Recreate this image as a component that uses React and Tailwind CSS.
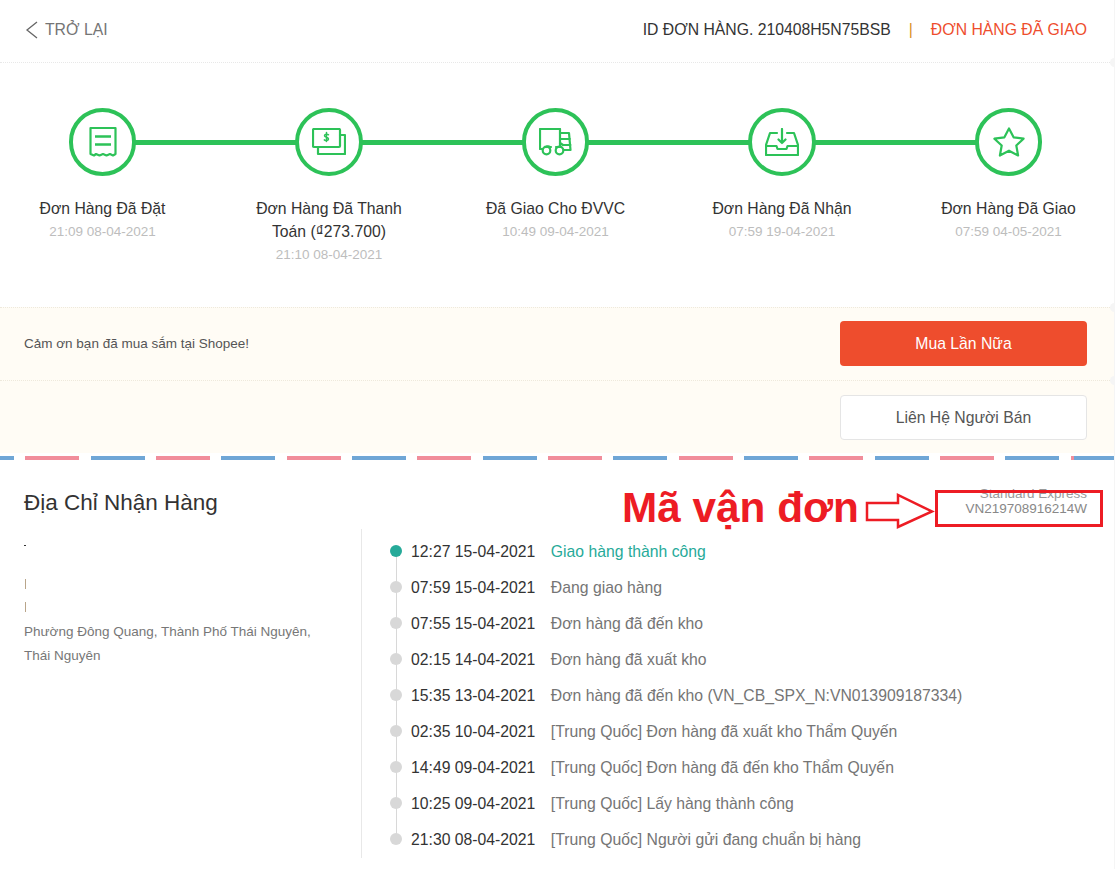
import React from "react";

const steps = [
  { title: "Đơn Hàng Đã Đặt", time: "21:09 08-04-2021", icon: "receipt" },
  { title: "Đơn Hàng Đã Thanh Toán (₫273.700)", time: "21:10 08-04-2021", icon: "money" },
  { title: "Đã Giao Cho ĐVVC", time: "10:49 09-04-2021", icon: "truck" },
  { title: "Đơn Hàng Đã Nhận", time: "07:59 19-04-2021", icon: "inbox" },
  { title: "Đơn Hàng Đã Giao", time: "07:59 04-05-2021", icon: "star" },
];

const tracking = [
  { time: "12:27 15-04-2021", text: "Giao hàng thành công" },
  { time: "07:59 15-04-2021", text: "Đang giao hàng" },
  { time: "07:55 15-04-2021", text: "Đơn hàng đã đến kho" },
  { time: "02:15 14-04-2021", text: "Đơn hàng đã xuất kho" },
  { time: "15:35 13-04-2021", text: "Đơn hàng đã đến kho (VN_CB_SPX_N:VN013909187334)" },
  { time: "02:35 10-04-2021", text: "[Trung Quốc] Đơn hàng đã xuất kho Thẩm Quyến" },
  { time: "14:49 09-04-2021", text: "[Trung Quốc] Đơn hàng đã đến kho Thẩm Quyến" },
  { time: "10:25 09-04-2021", text: "[Trung Quốc] Lấy hàng thành công" },
  { time: "21:30 08-04-2021", text: "[Trung Quốc] Người gửi đang chuẩn bị hàng" },
];

const StepIcon = ({ name }) => {
  const common = {
    fill: "none",
    stroke: "#2dc258",
    strokeWidth: 2.2,
    strokeLinejoin: "round",
    strokeLinecap: "round",
  };
  if (name === "receipt") {
    return (
      <svg {...common} width="28" height="32" viewBox="0 0 28 32">
        <path d="M1.500 2h25v26l-2.500 1.500-3-1.500-3.500 1.500-3.500-1.500-3.500 1.500-3.500-1.500-2 1.500-3.500-1.500z" />
        <path d="M6 10.500h16M6 18.500h16" strokeWidth="2.600" strokeLinecap="butt" />
      </svg>
    );
  }
  if (name === "money") {
    return (
      <svg {...common} width="34" height="28" viewBox="0 0 34 28">
        <rect x="1" y="1" width="27" height="18" rx="1" />
        <path d="M6 19v7h27V7h-5" />
        <path d="M16.500 6.800c-1-.9-4-.9-4 .9s4 1.400 4 3.400-3 1.800-4.200 .8M14.500 4.500v9" strokeWidth="1.500" />
      </svg>
    );
  }
  if (name === "truck") {
    return (
      <svg {...common} width="33" height="28" viewBox="0 0 33 28">
        <path d="M3.800 21H1V1h20v18h-4M12 19h-1c-1-1-3-1-4 0" />
        <path d="M21 5h9l1.500 17H25M21 11h10M24 17h7.500M21 15l3 2" />
        <circle cx="7.500" cy="22.500" r="3.800" />
        <circle cx="20.500" cy="22.500" r="3.800" />
      </svg>
    );
  }
  if (name === "inbox") {
    return (
      <svg {...common} width="34" height="28" viewBox="0 0 34 28">
        <path d="M12 5H5L1 17v10h32V17L29 5h-7" />
        <path d="M1 18h10.500l1 3h9l1-3H33" />
        <path d="M17 1v14M13.500 11.500L17 15l3.500-3.500" />
      </svg>
    );
  }
  return (
    <svg {...common} width="32" height="30" viewBox="0 0 32 30">
      <path d="M16 1.500l4.600 8.800 10 1.400-7.300 6.800 1.800 10L16 23.700l-9.100 4.800 1.800-10-7.300-6.800 10-1.400z" />
    </svg>
  );
};

const App = () => {
  return (
    <div className="relative w-[1115px] h-[869px] overflow-hidden bg-[#f5f5f5] font-['Liberation_Sans',Arial,sans-serif]">
      <div className="w-[1114px] h-full bg-white">
        {/* Top bar */}
        <div className="flex items-center justify-between h-[63px] pl-[25px] pr-[27px] pb-[3px] border-b border-dotted border-[#e8e8e8]">
          <div className="flex items-center gap-[6px] text-[#757575] text-[15.750px]">
            <svg width="14" height="18" viewBox="0 0 14 18" fill="none" stroke="#666" strokeWidth="1.300">
              <path d="M12 1L2 9l10 8" />
            </svg>
            <span>TRỞ LẠI</span>
          </div>
          <div className="flex items-center text-[15.750px]">
            <span className="text-[#333]">ID ĐƠN HÀNG. 210408H5N75BSB</span>
            <span className="mx-[18px] text-[#d98f1f]">|</span>
            <span className="text-[#ee4d2d]">ĐƠN HÀNG ĐÃ GIAO</span>
          </div>
        </div>

        {/* Stepper */}
        <div className="relative h-[244px] pt-[45px] pl-[27.500px] pr-[30.500px]">
          <div className="absolute left-[102px] top-[77px] w-[906px] h-[5px] bg-[#2dc258]" />
          <div className="relative flex justify-between">
            {steps.map((step) => (
              <div key={step.icon} className="flex flex-col items-center w-[150px] text-center">
                <div className="flex items-center justify-center w-[67.500px] h-[67.500px] rounded-full border-4 border-[#2dc258] bg-white">
                  <StepIcon name={step.icon} />
                </div>
                <div className="mt-[21px] text-[15.750px] leading-[23px] text-[#333]">{step.title}</div>
                <div className="pt-px text-[13.500px] leading-[22px] text-[#bdbdbd]">{step.time}</div>
              </div>
            ))}
          </div>
        </div>

        {/* Actions */}
        <div className="bg-[#fffcf5]">
          <div className="flex items-center justify-between h-[74px] pl-6 pr-[27px] pb-[2px] border-y border-dotted border-[#eee9dc]">
            <span className="pt-[2px] text-[13.500px] text-[#555]">Cảm ơn bạn đã mua sắm tại Shopee!</span>
            <button className="w-[247px] h-[45px] pt-px rounded-sm bg-[#ee4d2d] text-white text-[15.750px]">
              Mua Lần Nữa
            </button>
          </div>
          <div className="flex items-center justify-end h-[72px] pr-[27px] pt-px">
            <button className="w-[247px] h-[45px] rounded-sm border border-[#e5e5e5] bg-white text-[#555] text-[15.750px]">
              Liên Hệ Người Bán
            </button>
          </div>
        </div>

        {/* Airmail stripe */}
        <div className="h-[4px] mt-[3px] bg-[repeating-linear-gradient(90deg,#6fa6d6,#6fa6d6_54px,transparent_0,transparent_65.330px,#f18d9b_0,#f18d9b_119.330px,transparent_0,transparent_130.670px)] bg-[position:-40px_0]" />

        {/* Address header */}
        <div className="flex justify-between pt-[20px] pl-6 pr-[27px]">
          <div className="text-[22.500px] leading-[38px] mt-[4px] text-[#333]">Địa Chỉ Nhận Hàng</div>
          <div className="text-right text-[13.500px] leading-[15px] mt-[6px] text-[#888]">
            <div className="text-[#999]">Standard Express</div>
            <div>VN219708916214W</div>
          </div>
        </div>

        {/* Address and tracking */}
        <div className="flex mt-[7px]">
          <div className="w-[361px] pl-6 pr-[40px] pt-[8px] text-[13.500px] leading-6 text-[#777]">
            <div className="h-6 pt-[8px]">
              <div className="w-[2px] h-px bg-[#333]" />
            </div>
            <div className="h-[11px]" />
            <div className="h-6 pt-[7px] pl-px">
              <div className="w-px h-[10px] bg-[#b9a58a]" />
            </div>
            <div className="h-[24px] pt-[6px] pl-px">
              <div className="w-px h-[10px] bg-[#b9a58a]" />
            </div>
            <div>Phường Đông Quang, Thành Phố Thái Nguyên, Thái Nguyên</div>
          </div>
          <div className="relative flex flex-col h-[329px] border-l border-[#e8e8e8] pl-[28px] pt-[5px]">
            <div className="absolute left-[34px] top-[22px] bottom-[19px] w-px bg-[#d8d8d8]" />
            {tracking.map((row, i) => (
              <div key={row.time} className="relative flex items-center h-9 text-[15.750px]">
                <span className={`w-3 h-3 -mt-[2px] rounded-full ${i === 0 ? "bg-[#26aa99]" : "bg-[#d8d8d8]"}`} />
                <span className="ml-[9px] text-[#333]">{row.time}</span>
                <span className={`ml-[15.500px] ${i === 0 ? "text-[#26aa99]" : "text-[#757575]"}`}>{row.text}</span>
              </div>
            ))}
          </div>
        </div>
      </div>

      {/* Ticket notches on the right edge */}
      <div className="absolute left-[1110px] top-[58px] w-[9px] h-[9px] rounded-full bg-[#f5f5f5]" />
      <div className="absolute left-[1110px] top-[303px] w-[9px] h-[9px] rounded-full bg-[#f5f5f5]" />
      <div className="absolute left-[1110px] top-[376px] w-[9px] h-[9px] rounded-full bg-[#f5f5f5]" />

      {/* Annotation drawn over the screenshot */}
      <div className="absolute left-[622px] top-[482px] text-[42.300px] leading-[52px] font-bold text-[#ed1c24]">Mã vận đơn</div>
      <svg className="absolute left-[864px] top-[492px]" width="72" height="38" viewBox="0 0 72 38" fill="none" stroke="#ed1c24" strokeWidth="2.500">
        <path d="M3 11h31V3l34 16.500L34 35v-7H3z" />
      </svg>
      <div className="absolute left-[935px] top-[490px] w-[168px] h-[37px] border-[3px] border-[#ed1c24]" />
    </div>
  );
};

export default App;
